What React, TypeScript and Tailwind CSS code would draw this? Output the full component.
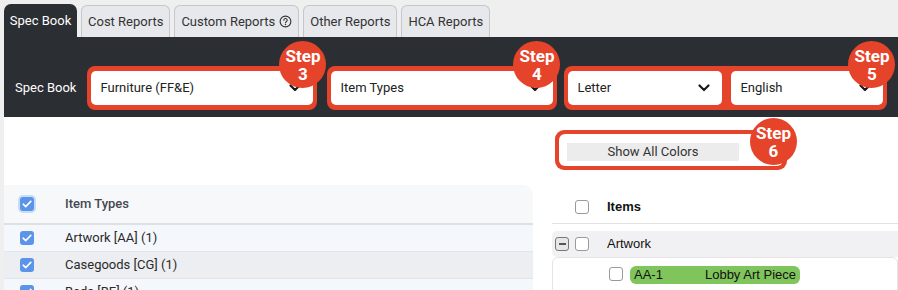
import React from "react";

const RED = "bg-[#e6432b]";

function Chevron() {
  return (
    <svg width="12" height="8" viewBox="0 0 12 8" className="shrink-0">
      <path d="M1.5 1.5L6 6l4.5-4.5" stroke="#1a1a1a" strokeWidth="2.2" fill="none" strokeLinecap="round" strokeLinejoin="round" />
    </svg>
  );
}

function Step({ n, className }: { n: number; className: string }) {
  return (
    <div
      className={`absolute z-10 w-[47px] h-[47px] rounded-full ${RED} text-white font-bold text-[17px] leading-[18px] flex flex-col items-center justify-center pt-[1px] ${className}`}
    >
      <span>Step</span>
      <span>{n}</span>
    </div>
  );
}

function Select({ label, className = "" }: { label: string; className?: string }) {
  return (
    <div className={`h-[34px] bg-white rounded-[5px] flex items-center justify-between pl-[9px] pr-[12px] text-[13px] text-[#222] ${className}`}>
      <span>{label}</span>
      <Chevron />
    </div>
  );
}

function BlueCheck({ glow = false }: { glow?: boolean }) {
  return (
    <div
      className={`w-[14px] h-[14px] rounded-[3px] bg-[#5a95e9] flex items-center justify-center ${glow ? "ring-2 ring-[#c9dcf8]" : ""}`}
    >
      <svg width="10" height="8" viewBox="0 0 10 8">
        <path d="M1.2 4.2l2.5 2.4L8.8 1.4" stroke="white" strokeWidth="1.6" fill="none" strokeLinecap="round" strokeLinejoin="round" />
      </svg>
    </div>
  );
}

function EmptyCheck() {
  return <div className="w-[14px] h-[14px] rounded-[3px] border border-[#9a9a9a] bg-white" />;
}

const tabs = ["Cost Reports", "Custom Reports", "Other Reports", "HCA Reports"];

const itemTypes = [
  { name: "Artwork [AA] (1)", bg: "bg-[#f4f7fb]" },
  { name: "Casegoods [CG] (1)", bg: "bg-[#eceef1]" },
  { name: "Beds [BE] (1)", bg: "bg-[#f4f7fb]" },
];

export default function App() {
  return (
    <div className="w-[898px] h-[290px] overflow-hidden bg-[#efefef] pl-[4px] font-['Roboto',sans-serif]">
      {/* tabs */}
      <div className="flex items-end gap-[4px] pt-[4px] h-[37px]">
        <div className="h-[33px] w-[73px] rounded-t-[7px] bg-[#2b2e32] text-white text-[13px] flex items-center justify-center">
          Spec Book
        </div>
        {tabs.map((t) => (
          <div
            key={t}
            className="h-[32px] px-[6px] rounded-t-[6px] border border-b-0 border-[#c5c7ca] bg-[#e6e8ec] text-[#333] text-[13px] flex items-center gap-[4px]"
          >
            {t}
            {t === "Custom Reports" && (
              <svg width="13" height="13" viewBox="0 0 14 14">
                <circle cx="7" cy="7" r="5.8" stroke="#333" strokeWidth="1.2" fill="none" />
                <path d="M5.2 5.6a1.8 1.8 0 1 1 2.6 1.6c-.6.3-.8.6-.8 1.2" stroke="#333" strokeWidth="1.2" fill="none" strokeLinecap="round" />
                <circle cx="7" cy="10.2" r="0.75" fill="#333" />
              </svg>
            )}
          </div>
        ))}
      </div>

      {/* dark toolbar */}
      <div className="h-[80px] bg-[#2b2e32] flex items-start pl-[11px] pt-[29px]">
        <span className="text-white text-[13px] mr-[11px] mt-[12px]">Spec Book</span>
        <div className={`relative w-[230px] pt-[5px] px-[4px] pb-[5px] rounded-[8px] ${RED}`}>
          <Select label="Furniture (FF&E)" />
          <Step n={3} className="-top-[25px] -right-[9px]" />
        </div>
        <div className={`relative ml-[10px] w-[230px] pt-[5px] px-[4px] pb-[5px] rounded-[8px] ${RED}`}>
          <Select label="Item Types" />
          <Step n={4} className="-top-[25px] -right-[3px]" />
        </div>
        <div className={`relative ml-[7px] w-[323px] pt-[5px] px-[4px] pb-[5px] rounded-[8px] ${RED} flex gap-[9px]`}>
          <Select label="Letter" className="w-[154px]" />
          <Select label="English" className="flex-1" />
          <Step n={5} className="-top-[25px] -right-[8px]" />
        </div>
      </div>

      {/* body */}
      <div className="bg-white h-[173px]">
        <div className="pt-[13px] pl-[551px]">
          <div className={`relative w-[232px] h-[40px] p-[4px] rounded-[9px] ${RED}`}>
            <div className="h-full bg-white rounded-[6px] pl-[8px] pt-[9px]">
              <div className="w-[172px] h-[18px] bg-[#ececec] text-[13px] text-[#333] flex items-center justify-center">
                Show All Colors
              </div>
            </div>
            <Step n={6} className="-top-[12px] -right-[10px]" />
          </div>
        </div>

        <div className="flex mt-[15px] gap-[19px]">
          {/* left table */}
          <div className="w-[529px] rounded-tr-[10px] overflow-hidden">
            <div className="h-[40px] bg-[#f7f8fa] flex items-center pl-[16px] border-b-2 border-[#dfe0e3]">
              <BlueCheck glow />
              <span className="ml-[31px] text-[13px] font-medium text-[#454851]">Item Types</span>
            </div>
            {itemTypes.map((r) => (
              <div key={r.name} className={`h-[27px] ${r.bg} flex items-center pl-[16px] border-b border-[#e3e5e9]`}>
                <BlueCheck />
                <span className="ml-[31px] text-[13px] text-[#2a2a2a]">{r.name}</span>
              </div>
            ))}
          </div>

          {/* right items */}
          <div className="flex-1 font-['Liberation_Sans',sans-serif]">
            <div className="h-[39px] border-b border-[#e2e2e2] flex items-center pl-[23px] pt-[6px]">
              <EmptyCheck />
              <span className="ml-[18px] text-[13px] font-bold text-[#111]">Items</span>
            </div>
            <div className="mt-[7px] h-[26px] bg-[#f1f1f3] rounded-l-[5px] flex items-center pl-[3px]">
              <div className="w-[14px] h-[14px] rounded-[3px] border border-[#777] bg-[#e6e6e6] flex items-center justify-center">
                <div className="w-[7px] h-[1.5px] bg-[#555]" />
              </div>
              <div className="ml-[6px]">
                <EmptyCheck />
              </div>
              <span className="ml-[18px] text-[13px] text-[#111]">Artwork</span>
            </div>
            <div className="h-[40px] border border-[#e4e4e4] rounded-[6px] flex items-start pl-[56px] pt-[9px]">
              <EmptyCheck />
              <div className="ml-[7px] w-[170px] h-[18px] rounded-[6px] bg-[#80c45c] flex items-center justify-between px-[4px] text-[13px] text-[#111] -mt-[1px]">
                <span>AA-1</span>
                <span>Lobby Art Piece</span>
              </div>
            </div>
          </div>
        </div>
      </div>
    </div>
  );
}
